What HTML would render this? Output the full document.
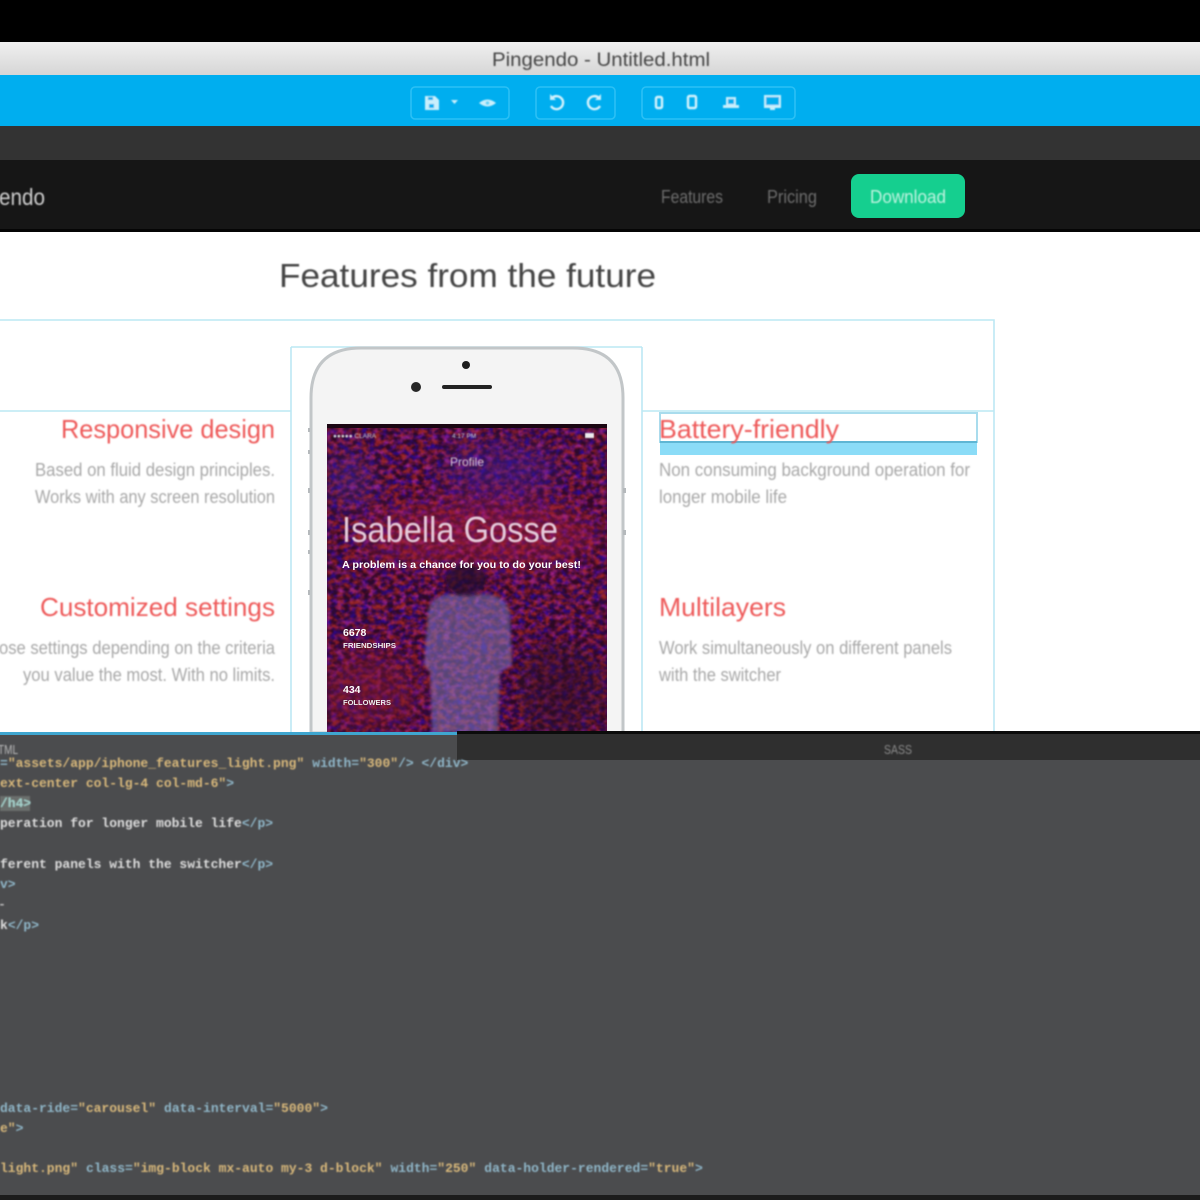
<!DOCTYPE html>
<html><head><meta charset="utf-8"><style>
html,body{margin:0;padding:0;background:#000;width:1200px;height:1200px;overflow:hidden}
svg{display:block}
text{font-family:"Liberation Sans",sans-serif}
.m{font-family:"Liberation Mono",monospace;font-size:13px;font-weight:bold}
</style></head><body>
<svg width="1200" height="1200" viewBox="0 0 1200 1200" xmlns="http://www.w3.org/2000/svg">
<defs>
<linearGradient id="tb" x1="0" y1="0" x2="0" y2="1"><stop offset="0" stop-color="#f0f0f0"/><stop offset="1" stop-color="#d4d4d4"/></linearGradient>
<filter id="b" x="-5%" y="-30%" width="110%" height="160%"><feGaussianBlur stdDeviation="0.7"/></filter>
<filter id="b2" x="-5%" y="-30%" width="110%" height="160%"><feGaussianBlur stdDeviation="1.5"/></filter>
<filter id="bs" x="-30%" y="-30%" width="160%" height="160%"><feGaussianBlur stdDeviation="14"/></filter>
<filter id="noise" x="0" y="0" width="100%" height="100%" color-interpolation-filters="sRGB">
<feTurbulence type="fractalNoise" baseFrequency="0.16 0.2" numOctaves="3" seed="11"/>
<feColorMatrix type="matrix" values="2.6 0 0 0 -0.9  0.7 0 0 0 -0.28  0 2.4 0 0 -0.92  0 0 0 0 1"/>
<feGaussianBlur stdDeviation="0.8"/>
</filter>
<clipPath id="scr"><rect x="327" y="424" width="280" height="309"/></clipPath>
</defs>

<!-- mac chrome -->
<rect width="1200" height="42" fill="#000"/>
<rect y="42" width="1200" height="35" fill="url(#tb)"/>
<text x="601" y="66" font-size="19" fill="#444" text-anchor="middle" textLength="218" lengthAdjust="spacingAndGlyphs" filter="url(#b)">Pingendo - Untitled.html</text>

<!-- blue toolbar -->
<rect y="75" width="1200" height="51" fill="#00aeef"/>
<g fill="none" stroke="#2cc0f5" stroke-width="1.6">
<rect x="411" y="87" width="98" height="32" rx="4"/>
<rect x="536" y="87" width="79" height="32" rx="4"/>
<rect x="642" y="87" width="153" height="32" rx="4"/>
</g>
<g filter="url(#b)" fill="#c9effc">
<path d="M425 96h10l4 4v10h-14z"/><rect x="428" y="97" width="5" height="3" fill="#00aeef"/><rect x="429" y="104" width="5" height="4" fill="#00aeef"/>
<path d="M451 100h7l-3.500 4z"/>
<path d="M479 103q8.500-7 17 0q-8.500 7-17 0z"/><circle cx="487.500" cy="103" r="1.800" fill="#5fd0f5"/>
<g fill="none" stroke="#d4f3fd" stroke-width="2.400">
<path d="M552 98a6.500 6.500 0 1 1-1 8"/>
<path d="M599 98a6.500 6.500 0 1 0 1 8"/>
<rect x="656" y="97" width="6" height="11" rx="1.500"/>
<rect x="688" y="96" width="8" height="12" rx="1.500"/>
</g>
<path d="M550 94v6h6z"/><path d="M601 94v6h-6z"/>
<path d="M726 97h10v8h3l0 3h-16v-3h3z"/><rect x="728" y="99" width="6" height="5" fill="#00aeef"/>
<path d="M764 95h17v13h-6v2h-5v-2h-6z"/><rect x="766" y="97" width="13" height="8" fill="#00aeef"/>
</g>

<!-- dark bar -->
<rect y="126" width="1200" height="34" fill="#333"/>

<!-- navbar -->
<rect y="160" width="1200" height="70" fill="#161616"/>
<rect y="229" width="1200" height="3" fill="#050505"/>
<text x="-1" y="205" font-size="23" fill="#cfcfcf" textLength="46" lengthAdjust="spacingAndGlyphs" filter="url(#b)">endo</text>
<text x="661" y="203" font-size="18" fill="#6d6d6d" textLength="62" lengthAdjust="spacingAndGlyphs" filter="url(#b)">Features</text>
<text x="767" y="203" font-size="18" fill="#6d6d6d" textLength="50" lengthAdjust="spacingAndGlyphs" filter="url(#b)">Pricing</text>
<rect x="851" y="174" width="114" height="44" rx="8" fill="#15cf8f"/>
<text x="908" y="203" font-size="18" fill="#bff3e0" text-anchor="middle" textLength="76" lengthAdjust="spacingAndGlyphs" filter="url(#b)">Download</text>

<!-- content -->
<rect y="232" width="1200" height="501" fill="#fff"/>
<text x="279" y="287" font-size="33" fill="#444" textLength="377" lengthAdjust="spacingAndGlyphs" filter="url(#b)">Features from the future</text>

<g fill="none" stroke="#bce8f4" stroke-width="1.600">
<path d="M0 320H994V733"/>
<path d="M0 411H291M642 411H994"/>
<path d="M291 347H642M291 347V733M642 347V733"/>
</g>

<!-- left column -->
<text x="275" y="438" font-size="26" fill="#ee5a5a" text-anchor="end" textLength="214" lengthAdjust="spacingAndGlyphs" filter="url(#b)">Responsive design</text>
<text x="275" y="476" font-size="18" fill="#a8a8a8" text-anchor="end" textLength="240" lengthAdjust="spacingAndGlyphs" filter="url(#b)">Based on fluid design principles.</text>
<text x="275" y="503" font-size="18" fill="#a8a8a8" text-anchor="end" textLength="240" lengthAdjust="spacingAndGlyphs" filter="url(#b)">Works with any screen resolution</text>
<text x="275" y="616" font-size="26" fill="#ee5a5a" text-anchor="end" textLength="235" lengthAdjust="spacingAndGlyphs" filter="url(#b)">Customized settings</text>
<text x="275" y="654" font-size="18" fill="#a8a8a8" text-anchor="end" textLength="276" lengthAdjust="spacingAndGlyphs" filter="url(#b)">ose settings depending on the criteria</text>
<text x="275" y="681" font-size="18" fill="#a8a8a8" text-anchor="end" textLength="252" lengthAdjust="spacingAndGlyphs" filter="url(#b)">you value the most. With no limits.</text>

<!-- right column -->
<rect x="660" y="413" width="317" height="29" fill="#fff" stroke="#a9dced" stroke-width="2"/>
<rect x="660" y="442" width="317" height="13" fill="#8bdcf7"/>
<rect x="660" y="441" width="317" height="2" fill="#5fb6d4"/>
<text x="659" y="438" font-size="26" fill="#ee5a5a" textLength="180" lengthAdjust="spacingAndGlyphs" filter="url(#b)">Battery-friendly</text>
<text x="659" y="476" font-size="18" fill="#a8a8a8" textLength="311" lengthAdjust="spacingAndGlyphs" filter="url(#b)">Non consuming background operation for</text>
<text x="659" y="503" font-size="18" fill="#a8a8a8" textLength="128" lengthAdjust="spacingAndGlyphs" filter="url(#b)">longer mobile life</text>
<text x="659" y="616" font-size="26" fill="#ee5a5a" textLength="127" lengthAdjust="spacingAndGlyphs" filter="url(#b)">Multilayers</text>
<text x="659" y="654" font-size="18" fill="#a8a8a8" textLength="293" lengthAdjust="spacingAndGlyphs" filter="url(#b)">Work simultaneously on different panels</text>
<text x="659" y="681" font-size="18" fill="#a8a8a8" textLength="122" lengthAdjust="spacingAndGlyphs" filter="url(#b)">with the switcher</text>

<!-- phone -->
<path d="M311 733V398Q311 348 361 348H573Q623 348 623 398V733Z" fill="#f4f4f4" stroke="#c2c6c8" stroke-width="3"/>
<g fill="#b5b9bc"><rect x="308" y="428" width="2" height="4"/><rect x="308" y="450" width="2" height="4"/><rect x="308" y="488" width="2" height="5"/><rect x="308" y="530" width="2" height="5"/><rect x="308" y="550" width="2" height="4"/><rect x="308" y="590" width="2" height="5"/><rect x="623" y="488" width="3" height="5"/><rect x="623" y="530" width="3" height="5"/></g>
<circle cx="466" cy="365" r="4" fill="#1d1d1d"/>
<circle cx="416" cy="387" r="5" fill="#262626"/>
<rect x="442" y="385" width="50" height="4" rx="2" fill="#222"/>

<g clip-path="url(#scr)">
<rect x="327" y="424" width="280" height="309" fill="#4a1248"/>
<rect x="327" y="424" width="280" height="309" filter="url(#noise)"/>
<rect x="327" y="424" width="280" height="309" fill="#4c1042" opacity="0.58"/>
<g opacity="0.5" filter="url(#bs)">
<ellipse cx="480" cy="535" rx="120" ry="30" fill="#a81c3e"/>
<ellipse cx="370" cy="690" rx="50" ry="40" fill="#7a1530"/>
<ellipse cx="560" cy="690" rx="45" ry="50" fill="#2c0a24"/>
<ellipse cx="500" cy="470" rx="60" ry="25" fill="#3f1c94"/>
<ellipse cx="350" cy="480" rx="22" ry="26" fill="#4a2a90"/>
</g>
<path d="M428 612Q430 596 450 594L486 594Q506 596 510 612L512 665L500 672L498 733H432L430 672L424 665Z" fill="#8078b8" opacity="0.55" filter="url(#b2)"/>
<ellipse cx="466" cy="580" rx="20" ry="16" fill="#1d0a2a" opacity="0.65" filter="url(#b2)"/>
<rect x="327" y="424" width="280" height="4" fill="#1a0612"/>
<text x="333" y="438" font-size="6.500" fill="#ddd" filter="url(#b)">●●●●● CLARA</text>
<text x="452" y="438" font-size="6.500" fill="#ddd" filter="url(#b)">4:17 PM</text>
<rect x="585" y="433" width="9" height="5" fill="#eee" filter="url(#b)"/>
<text x="467" y="466" font-size="12" fill="#d8c8d8" text-anchor="middle" filter="url(#b)">Profile</text>
<text x="342" y="542" font-size="36" fill="#e6ccdc" textLength="216" lengthAdjust="spacingAndGlyphs" filter="url(#b)">Isabella Gosse</text>
<text x="342" y="568" font-size="10.500" font-weight="bold" fill="#fff" textLength="239" lengthAdjust="spacingAndGlyphs">A problem is a chance for you to do your best!</text>
<text x="343" y="636" font-size="10.500" font-weight="bold" fill="#fff">6678</text>
<text x="343" y="648" font-size="7" font-weight="bold" fill="#eee" textLength="53" lengthAdjust="spacingAndGlyphs">FRIENDSHIPS</text>
<text x="343" y="693" font-size="10.500" font-weight="bold" fill="#fff">434</text>
<text x="343" y="705" font-size="7" font-weight="bold" fill="#eee" textLength="48" lengthAdjust="spacingAndGlyphs">FOLLOWERS</text>
</g>

<!-- editor -->
<rect y="733" width="1200" height="467" fill="#4b4c4e"/>
<rect x="457" y="733" width="743" height="27" fill="#2f2f2f"/>
<rect x="0" y="732" width="457" height="3" fill="#3fa6d0"/>
<rect x="457" y="731" width="743" height="3" fill="#0b0b0b"/>
<text x="884" y="754" font-size="13" fill="#8a8a8a" textLength="28" lengthAdjust="spacingAndGlyphs" filter="url(#b)">SASS</text>
<text x="-2" y="754" font-size="13" fill="#b8b8b8" textLength="20" lengthAdjust="spacingAndGlyphs" filter="url(#b)">TML</text>

<g class="code" filter="url(#b)">
<text class="m" y="767"><tspan x="0" fill="#8fb6c8">=</tspan><tspan fill="#d8b87a">"assets/app/iphone_features_light.png"</tspan><tspan dx="8" fill="#8fb6c8">width=</tspan><tspan fill="#d8b87a">"300"</tspan><tspan fill="#8fb6c8">/&gt; &lt;/div&gt;</tspan></text>
<text class="m" y="787"><tspan x="0" fill="#d8b87a">ext-center col-lg-4 col-md-6"</tspan><tspan fill="#8fb6c8">&gt;</tspan></text>
<rect x="0" y="796" width="30" height="15" fill="#6a6e6c"/>
<text class="m" y="807" x="0" fill="#a5d2cc">/h4&gt;</text>
<text class="m" y="827"><tspan x="0" fill="#dddddd">peration for longer mobile life</tspan><tspan fill="#8fb6c8">&lt;/p&gt;</tspan></text>
<text class="m" y="868"><tspan x="0" fill="#dddddd">ferent panels with the switcher</tspan><tspan fill="#8fb6c8">&lt;/p&gt;</tspan></text>
<text class="m" y="888" x="0" fill="#8fb6c8">v&gt;</text>
<text class="m" y="908" x="-2" fill="#bbb">-</text>
<text class="m" y="929"><tspan x="0" fill="#dddddd">k</tspan><tspan fill="#8fb6c8">&lt;/p&gt;</tspan></text>
<text class="m" y="1112"><tspan x="0" fill="#8fb6c8">data-ride=</tspan><tspan fill="#d8b87a">"carousel"</tspan><tspan dx="8" fill="#8fb6c8">data-interval=</tspan><tspan fill="#d8b87a">"5000"</tspan><tspan fill="#8fb6c8">&gt;</tspan></text>
<text class="m" y="1132"><tspan x="0" fill="#d8b87a">e"</tspan><tspan fill="#8fb6c8">&gt;</tspan></text>
<text class="m" y="1172"><tspan x="0" fill="#d8b87a">light.png"</tspan><tspan dx="8" fill="#8fb6c8">class=</tspan><tspan fill="#d8b87a">"img-block mx-auto my-3 d-block"</tspan><tspan dx="8" fill="#8fb6c8">width=</tspan><tspan fill="#d8b87a">"250"</tspan><tspan dx="8" fill="#8fb6c8">data-holder-rendered=</tspan><tspan fill="#d8b87a">"true"</tspan><tspan fill="#8fb6c8">&gt;</tspan></text>
</g>
<rect y="1195" width="1200" height="5" fill="#1c1c1c"/>
</svg>
</body></html>
